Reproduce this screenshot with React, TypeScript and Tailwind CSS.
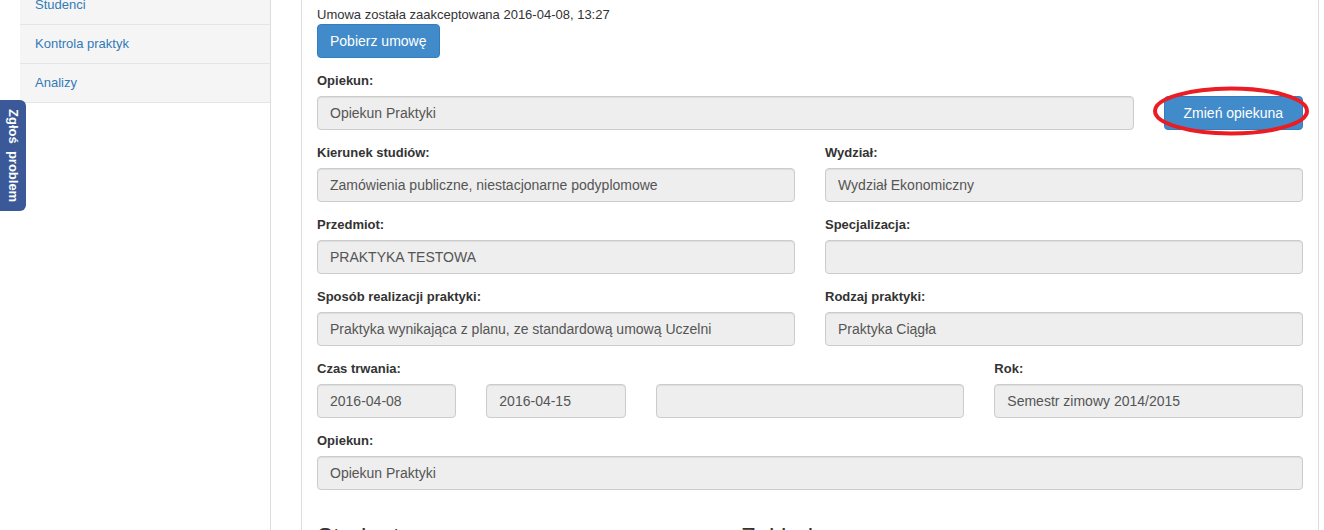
import React from "react";

const NAV = ["Studenci", "Kontrola praktyk", "Analizy"];

function Field({
  label,
  value,
  className = "",
}: {
  label?: string;
  value?: string;
  className?: string;
}) {
  return (
    <div className={`mb-[13px] ${className}`}>
      <label className="mb-[5px] block h-[20px] text-[13px] font-bold leading-[20px] text-[#333]">
        {label ?? "\u00a0"}
      </label>
      <Box value={value} />
    </div>
  );
}

function Box({ value }: { value?: string }) {
  return (
    <div className="h-[34px] truncate rounded-[4px] border border-[#ccc] bg-[#eee] px-[12px] text-[14px] leading-[32px] text-[#555] shadow-[inset_0_1px_1px_rgba(0,0,0,0.075)]">
      {value}
    </div>
  );
}

export default function App() {
  return (
    <div className="relative h-[530px] w-[1324px] overflow-hidden bg-white font-['Liberation_Sans',Arial,sans-serif] text-[13px] text-[#333]">
      <div className="flex h-full">
        <aside className="ml-[20px] h-full w-[251px] shrink-0 border-r border-[#ddd]">
          <ul className="-mt-[14px]">
            {NAV.map((n) => (
              <li
                key={n}
                className="flex h-[39px] items-center border-b border-[#e5e5e5] bg-[#f5f5f5] px-[15px] text-[13px] text-[#337ab7]"
              >
                {n}
              </li>
            ))}
          </ul>
        </aside>

        <main className="ml-[30px] h-full w-[1018px] shrink-0 border-x border-[#ddd] px-[15px] pt-[6px]">
          <p className="leading-[17px]">Umowa została zaakceptowana 2016-04-08, 13:27</p>
          <button className="mt-[1px] h-[34px] rounded-[4px] border border-[#357ebd] bg-[#428bca] px-[12px] text-[14px] leading-[20px] text-white">
            Pobierz umowę
          </button>

          <div className="mt-[13px] grid grid-cols-12 gap-x-[30px]">
            <Field className="col-span-10" label="Opiekun:" value="Opiekun Praktyki" />
            <div className="col-span-2 mb-[13px]">
              <div className="mb-[5px] h-[20px]" />
              <div className="relative">
                <button className="h-[34px] w-full rounded-[4px] border border-[#357ebd] bg-[#428bca] text-[14px] leading-[20px] text-white">
                  Zmień opiekuna
                </button>
                <svg
                  className="pointer-events-none absolute left-[-11px] top-[-10px]"
                  width="158"
                  height="52"
                  viewBox="0 0 158 52"
                >
                  <ellipse cx="78" cy="25" rx="76" ry="22.5" fill="none" stroke="#ea1c24" strokeWidth="4" />
                </svg>
              </div>
            </div>

            <Field
              className="col-span-6"
              label="Kierunek studiów:"
              value="Zamówienia publiczne, niestacjonarne podyplomowe"
            />
            <Field className="col-span-6" label="Wydział:" value="Wydział Ekonomiczny" />

            <Field className="col-span-6" label="Przedmiot:" value="PRAKTYKA TESTOWA" />
            <Field className="col-span-6" label="Specjalizacja:" value="" />

            <Field
              className="col-span-6"
              label="Sposób realizacji praktyki:"
              value="Praktyka wynikająca z planu, ze standardową umową Uczelni"
            />
            <Field className="col-span-6" label="Rodzaj praktyki:" value="Praktyka Ciągła" />

            <div className="col-span-8 mb-[13px]">
              <label className="mb-[5px] block h-[20px] text-[13px] font-bold leading-[20px]">
                Czas trwania:
              </label>
              <div className="grid grid-cols-8 gap-x-[30px]">
                <div className="col-span-2">
                  <Box value="2016-04-08" />
                </div>
                <div className="col-span-2">
                  <Box value="2016-04-15" />
                </div>
                <div className="col-span-4">
                  <Box value="" />
                </div>
              </div>
            </div>
            <Field className="col-span-4" label="Rok:" value="Semestr zimowy 2014/2015" />

            <Field className="col-span-12" label="Opiekun:" value="Opiekun Praktyki" />
          </div>

          <div className="mt-[21px] flex text-[24px] leading-[26px]">
            <h3 className="w-[424px]">Student</h3>
            <h3>Zakład pracy</h3>
          </div>
        </main>
      </div>

      <div className="absolute left-0 top-[100px] flex h-[111px] w-[26px] items-center justify-center rounded-r-[6px] bg-[#3b5998]">
        <span className="whitespace-pre text-[13px] font-bold leading-[14px] text-white [writing-mode:vertical-rl]">
          {"Zgłoś  problem"}
        </span>
      </div>
    </div>
  );
}
